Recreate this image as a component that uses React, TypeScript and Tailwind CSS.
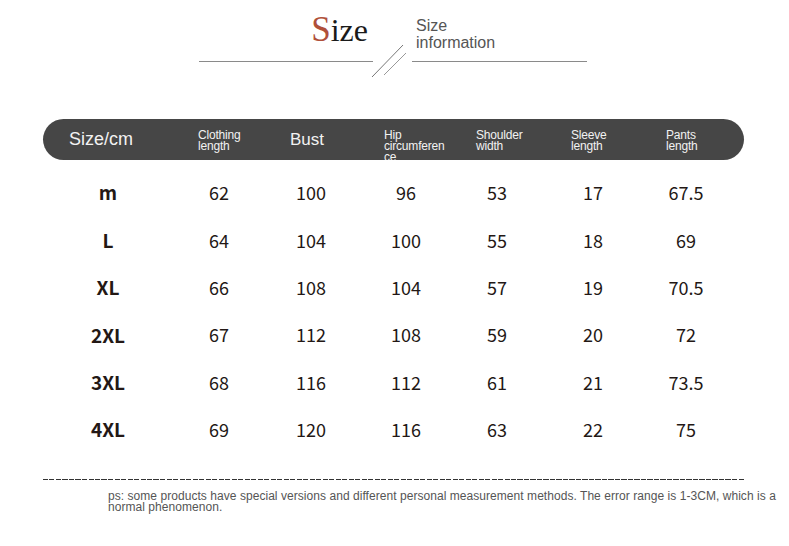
const headers: { label: string; big?: boolean; w: string }[] = [
  { label: "Size/cm", big: true, w: "w-[129px]" },
  { label: "Clothing length", w: "w-[92px]" },
  { label: "Bust", big: true, w: "w-[94px]" },
  { label: "Hip circumference", w: "w-[92px]" },
  { label: "Shoulder width", w: "w-[95px]" },
  { label: "Sleeve length", w: "w-[95px]" },
  { label: "Pants length", w: "w-[78px]" },
];

const rows: string[][] = [
  ["m", "62", "100", "96", "53", "17", "67.5"],
  ["L", "64", "104", "100", "55", "18", "69"],
  ["XL", "66", "108", "104", "57", "19", "70.5"],
  ["2XL", "67", "112", "108", "59", "20", "72"],
  ["3XL", "68", "116", "112", "61", "21", "73.5"],
  ["4XL", "69", "120", "116", "63", "22", "75"],
];

const colClass = [
  "w-[130px]",
  "w-[92px]",
  "w-[92px]",
  "w-[98px]",
  "w-[84px]",
  "w-[108px]",
  "w-[78px]",
];

function Title() {
  return (
    <div className="flex items-start">
      <div className="ml-[199px] w-[174px] h-[62px] border-b border-[#8a8a8a] flex justify-end pr-[5px] pt-[14px]">
        <span className="font-['Liberation_Serif',serif] text-[32px] leading-[32px] text-[#1a1a1a]">
          <span className="text-[35px] text-[#b0503a]">S</span>ize
        </span>
      </div>
      <svg width="39" height="40" viewBox="0 0 39 40" className="mt-[40px] -mb-[18px] overflow-visible">
        <line x1="-1" y1="37" x2="30" y2="5" stroke="#777" strokeWidth="1" />
        <line x1="11" y1="35" x2="33" y2="13" stroke="#999" strokeWidth="1" />
      </svg>
      <div className="w-[175px] h-[62px] border-b border-[#8a8a8a] pl-[4px] pt-[17px] text-[16px] leading-[17px] text-[#555] font-['Liberation_Sans',Arial,sans-serif]">
        <div>Size</div>
        <div>information</div>
      </div>
    </div>
  );
}

function HeaderBar() {
  return (
    <div className="ml-[43px] mt-[57px] w-[701px] h-[41px] rounded-full bg-[#464646] overflow-hidden flex pl-[26px] text-[#f2f2f2] font-['Liberation_Sans',Arial,sans-serif]">
      {headers.map((h) =>
        h.big ? (
          <div key={h.label} className={`${h.w} flex items-center ${h.label === "Bust" ? "text-[17px]" : "text-[18px]"}`}>
            {h.label}
          </div>
        ) : (
          <div key={h.label} className={`${h.w} pt-[11px]`}>
            <div className="w-[64px] text-[12px] leading-[11px] tracking-[-0.2px] [overflow-wrap:break-word]">{h.label}</div>
          </div>
        )
      )}
    </div>
  );
}

function SizeRows() {
  return (
    <div className="ml-[43px] mt-[9px] flex flex-col font-['Noto_Sans_CJK_SC','Noto_Sans',sans-serif] text-[#231815]">
      {rows.map((r) => (
        <div key={r[0]} className="flex h-[47.4px] items-center">
          {r.map((v, i) => (
            <div
              key={i}
              className={`${colClass[i]} text-center ${i === 0 ? "text-[19px] font-bold" : "text-[18px]"}`}
            >
              {v}
            </div>
          ))}
        </div>
      ))}
    </div>
  );
}

export default function App() {
  return (
    <div className="w-[789px] h-[546px] bg-white overflow-hidden">
      <Title />
      <HeaderBar />
      <SizeRows />
      <div className="ml-[43px] mt-[26px] w-[701px] h-px bg-[repeating-linear-gradient(90deg,#333_0_5px,transparent_5px_6.5px)]" />
      <p className="ml-[108px] mt-[11px] w-[672px] text-[12px] leading-[11px] tracking-[0.05px] text-[#555] font-['Liberation_Sans',Arial,sans-serif]">
        ps: some products have special versions and different personal measurement methods. The error range is 1-3CM, which is a
        normal phenomenon.
      </p>
    </div>
  );
}
